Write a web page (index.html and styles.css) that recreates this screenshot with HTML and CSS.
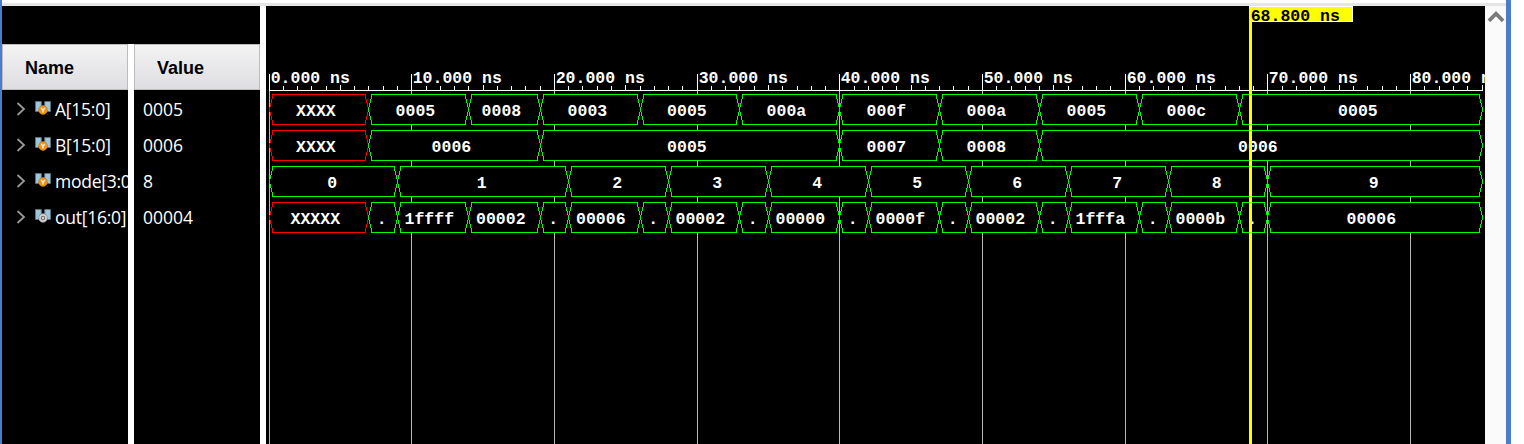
FILE: index.html
```
<!DOCTYPE html>
<html lang="en">
<head>
<meta charset="utf-8">
<title>Waveform viewer</title>
<link rel="stylesheet" href="styles.css">
</head>
<body>
<svg class="defs" aria-hidden="true">
  <symbol id="chevron" viewBox="0 0 10 16"><path d="M1.500 2 8 8 1.500 14" fill="none" stroke="#999" stroke-width="1.8"/></symbol>
  <symbol id="bus" viewBox="0 0 16 14"><path d="M.5.5h5.800v4.200L3.500 10.500h-3zM9.700.5h5.800v10h-3L9.700 4.700z" fill="#9bc7dc" stroke="#62717b" stroke-width=".9"/></symbol>
  <symbol id="variable" viewBox="0 0 16 14"><use href="#bus" width="16" height="14"/><circle cx="8" cy="9" r="4.400" fill="#f2931e" stroke="#c77a18" stroke-width=".7"/><path d="M6.200 6.800 8 9.300 9.800 6.800M8 9v2.500" fill="none" stroke="#fff3df" stroke-width="1.300"/></symbol>
  <symbol id="net" viewBox="0 0 16 14"><use href="#bus" width="16" height="14"/><circle cx="8" cy="9" r="4.300" fill="#d8d8d8" stroke="#8d8d8d" stroke-width=".8"/><circle cx="8" cy="9" r="1.700" fill="#eee" stroke="#777" stroke-width="1.300"/></symbol>
</svg>
<div class="viewer">
  <aside class="signals">
    <section class="column">
      <h2 class="heading">Name</h2>
      <div class="row"><svg class="chevron"><use href="#chevron"/></svg><svg class="kind"><use href="#variable"/></svg><span>A[15:0]</span></div>
      <div class="row"><svg class="chevron"><use href="#chevron"/></svg><svg class="kind"><use href="#variable"/></svg><span>B[15:0]</span></div>
      <div class="row"><svg class="chevron"><use href="#chevron"/></svg><svg class="kind"><use href="#variable"/></svg><span>mode[3:0]</span></div>
      <div class="row"><svg class="chevron"><use href="#chevron"/></svg><svg class="kind"><use href="#net"/></svg><span>out[16:0]</span></div>
    </section>
    <section class="column values">
      <h2 class="heading">Value</h2>
      <div class="row">0005</div>
      <div class="row">0006</div>
      <div class="row">8</div>
      <div class="row">00004</div>
    </section>
  </aside>
  <main class="wave"><svg id="plot" class="plot" viewBox="266 6 1219 438"></svg></main>
  <div class="scrollbar"><svg class="up" viewBox="0 0 16 11"><path d="M1.500 9 8 2.500 14.500 9" fill="none" stroke="#7b7b7b" stroke-width="3.400"/></svg></div>
</div>
<script src="wave.js"></script>
</body>
</html>
```
FILE: styles.css
```
body {
  margin: 0;
  background: #fff;
  overflow: hidden;
}
.defs {
  display: none;
}
.viewer {
  box-sizing: border-box;
  display: flex;
  width: 1511px;
  height: 444px;
  padding-top: 6px;
  border-left: 2px solid #4a7ccb;
  border-right: 5px solid #4a7ccb;
  background: linear-gradient(#fff 3px, #e5e5e5 3px, #e5e5e5 6px, #fff 6px);
}
.signals {
  box-sizing: border-box;
  display: flex;
  gap: 6px;
  width: 258px;
  margin-right: 6px;
  border-top: 38px solid #000;
}
.column {
  width: 126px;
  overflow: hidden;
  background: #000;
  color: #fff;
  font: 17.5px/36px "Open Sans", "Noto Sans", sans-serif;
}
.heading {
  box-sizing: border-box;
  height: 46px;
  margin: 0 0 1px;
  padding-left: 22px;
  border: 1px solid #bcbcbc;
  background: linear-gradient(#f3f3f3, #dedee2);
  color: #000;
  font: bold 18px/46px "Liberation Sans", Arial, sans-serif;
}
.row {
  display: flex;
  align-items: center;
  height: 36px;
  padding-left: 14px;
  white-space: nowrap;
}
.values .row {
  padding-left: 9px;
}
.chevron {
  flex: none;
  width: 10px;
  height: 16px;
  margin: 0 9px 1px 0;
}
.kind {
  flex: none;
  width: 16px;
  height: 14px;
  margin: 0 4px 3px 0;
}
.row span {
  letter-spacing: -0.25px;
}
.wave {
  width: 1219px;
  background: #000;
}
.plot {
  display: block;
  width: 1219px;
  height: 438px;
}
.scrollbar {
  display: flex;
  justify-content: center;
  flex: 1;
  background: #fafafa;
}
.up {
  width: 18px;
  height: 12px;
  margin-top: 5px;
}
.grid {
  stroke: #b8b8b8;
  shape-rendering: crispEdges;
}
.ruler {
  stroke: #fff;
  shape-rendering: crispEdges;
}
.cell {
  fill: #000;
  stroke: #0f0;
  shape-rendering: crispEdges;
}
.unknown {
  stroke: #f00;
}
.label {
  fill: #fff;
  font: bold 16.5px "Liberation Mono", "Courier New", monospace;
  white-space: pre;
}
.centered {
  text-anchor: middle;
}
.cursor {
  fill: #ff0;
}
.flag {
  fill: #ff0;
  stroke: #fff;
}
.time {
  fill: #000;
}
```
FILE: wave.js
```
const plot = document.getElementById("plot");
const END = 85;
const xAt = ns => ns === END ? 1482 : Math.floor(269.08 + 14.269 * ns);

function add(tag, attrs, text) {
  const node = document.createElementNS("http://www.w3.org/2000/svg", tag);
  for (const key in attrs) node.setAttribute(key, attrs[key]);
  if (text !== undefined) node.textContent = text;
  plot.appendChild(node);
}

// Each signal is a list of [start time in ns, value].
const signals = [
  [[0, "XXXX"], [7, "0005"], [14, "0008"], [19, "0003"], [26, "0005"], [33, "000a"], [40, "000f"], [47, "000a"], [54, "0005"], [61, "000c"], [68, "0005"]],
  [[0, "XXXX"], [7, "0006"], [19, "0005"], [40, "0007"], [47, "0008"], [54, "0006"]],
  [[0, "0"], [9, "1"], [21, "2"], [28, "3"], [35, "4"], [42, "5"], [49, "6"], [56, "7"], [63, "8"], [70, "9"]],
  [[0, "XXXXX"], [7, "."], [9, "1ffff"], [14, "00002"], [19, "."], [21, "00006"], [26, "."], [28, "00002"], [33, "."], [35, "00000"], [40, "."], [42, "0000f"], [47, "."], [49, "00002"], [54, "."], [56, "1fffa"], [61, "."], [63, "0000b"], [68, "."], [70, "00006"]]
];

// Ruler and grid
for (let ns = 0; ns <= END; ns++) {
  const x = xAt(ns) + 0.5;
  if (ns % 10 === 0) {
    add("path", { class: "grid", d: `M${x} 91V444` });
    add("text", { class: "label", x: x + 1.2, y: 83 }, ns + ".000 ns");
  }
  const top = ns % 10 === 0 ? 74 : ns % 5 === 0 ? 85 : 86;
  add("path", { class: "ruler", d: `M${x} ${top}V91` });
}
add("path", { class: "ruler", d: "M269 90.5H1483" });

// Bus cells
signals.forEach((changes, row) => {
  const top = 94.5 + row * 36;
  changes.forEach(([start, value], i) => {
    const a = xAt(start) + 0.5;
    const b = xAt(i + 1 < changes.length ? changes[i + 1][0] : END) + 0.5;
    add("path", {
      class: value[0] === "X" ? "cell unknown" : "cell",
      d: `M${a} ${top + 15}L${a + 3.5} ${top}H${b - 3.5}L${b} ${top + 15}L${b - 3.5} ${top + 30}H${a + 3.5}Z`
    });
    add("text", {
      class: "label centered",
      x: (a + b) / 2 - 0.7 - 0.6 * value.length,
      y: top + 21.5
    }, value);
  });
});

// Time cursor
add("rect", { class: "flag", x: 1249.5, y: 6.5, width: 103, height: 15 });
add("rect", { class: "cursor", x: 1249, y: 7, width: 3, height: 437 });
add("text", { class: "label time", x: 1250.7, y: 21 }, "68.800 ns");
```
